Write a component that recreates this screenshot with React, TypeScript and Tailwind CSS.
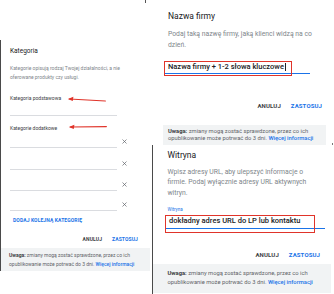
import React from 'react';

const BLUE = 'text-[#1a73e8]';

function Cross() {
  return (
    <svg viewBox="0 0 10 10" className="h-[5px] w-[5px]" fill="none" stroke="#5f6368" strokeWidth="1.4">
      <path d="M1 1 L9 9 M9 1 L1 9" />
    </svg>
  );
}

function CatRow({ h }: { h: string }) {
  return (
    <div className={`flex items-end ${h}`}>
      <div className="w-[107px] self-stretch border-b border-[#dadce0]" />
      <div className="mb-[3.5px] ml-[4.5px]">
        <Cross />
      </div>
    </div>
  );
}

function Arrow({ className, d }: { className: string; d: string }) {
  return (
    <svg className={`pointer-events-none absolute ${className}`} viewBox="0 0 50 10" fill="none">
      <path d={d} stroke="#e0342a" strokeWidth="1.4" strokeLinecap="round" />
      <path d="M1 5 L8 2.2 L7.2 7.6 Z" fill="#e0342a" />
    </svg>
  );
}

function Footer({ className, text }: { className: string; text: string }) {
  return (
    <div className={`bg-[#f1f3f4] text-[#5f6368] ${className}`}>
      <p className={text}>
        <span className="font-bold text-[#3c4043]">Uwaga:</span> zmiany mogą zostać sprawdzone, przez co ich
        <br />
        opublikowanie może potrwać do 3 dni. <span className={`font-medium ${BLUE}`}>Więcej informacji</span>
      </p>
    </div>
  );
}

function Buttons({ className, size }: { className: string; size: string }) {
  return (
    <div className={`flex justify-end font-bold tracking-[0.02em] ${size} ${className}`}>
      <span className="text-[#3c4043]">ANULUJ</span>
      <span className={`ml-[10px] ${BLUE}`}>ZASTOSUJ</span>
    </div>
  );
}

export default function App() {
  return (
    <div className="relative flex h-[294px] w-[334px] overflow-hidden bg-white font-[Roboto,Arial,sans-serif]">
      {/* drobne krawędzie sąsiednich zrzutów */}
      <div className="absolute left-[145px] top-0 h-[3px] w-px bg-[#555]" />
      <div className="absolute left-[332px] top-[143px] h-[2px] w-px bg-[#777]" />

      {/* lewy panel: kategoria */}
      <div className="relative mt-[40px] flex h-[231px] w-[150px] flex-col border-l-[1.5px] border-[#4a4a4a]">
        <div className="pl-[9px]">
          <h2 className="mt-[7px] text-[6.5px] leading-[9px] text-[#202124]">Kategoria</h2>
          <p className="mt-[8px] text-[5px] leading-[9px] text-[#80868b]">
            Kategorie opisują rodzaj Twojej działalności, a nie
            <br />
            oferowane produkty czy usługi.
          </p>
          <p className="mt-[11.5px] text-[5px] leading-[8px] text-[#3c4043]">Kategoria podstawowa</p>
          <div className="mt-[13px] h-px w-[107px] bg-[#dadce0]" />
          <p className="mt-[8px] text-[5px] leading-[8px] text-[#3c4043]">Kategorie dodatkowe</p>
          <CatRow h="h-[16px]" />
          <CatRow h="h-[22px]" />
          <CatRow h="h-[21px]" />
          <CatRow h="h-[20px]" />
          <p className={`ml-[3px] mt-[6.5px] text-[5px] font-bold leading-[7px] tracking-[0.02em] ${BLUE}`}>
            DODAJ KOLEJNĄ KATEGORIĘ
          </p>
        </div>
        <Buttons className="mt-[12px] pr-[12px] leading-[7px]" size="text-[5px]" />
        <Footer className="mt-[4.5px] h-[23px] px-[8px] pt-[3.5px]" text="text-[5px] leading-[8.5px]" />
        <Arrow className="left-[66px] top-[55px] h-[8px] w-[40px]" d="M3 5 L48 7.5" />
        <Arrow className="left-[63px] top-[83px] h-[8px] w-[48px]" d="M3 5 L48 4.5" />
      </div>

      {/* prawa kolumna */}
      <div className="ml-[2px] flex w-[182px] flex-col">
        {/* nazwa firmy */}
        <div className="ml-[11px] flex h-[145px] w-[163px] shrink-0 flex-col">
          <div className="pl-[5px]">
            <h2 className="mt-[10.5px] text-[8.5px] leading-[11px] text-[#202124]">Nazwa firmy</h2>
            <p className="mt-[7px] text-[6.8px] leading-[11px] text-[#80868b]">
              Podaj taką nazwę firmy, jaką klienci widzą na co
              <br />
              dzień.
            </p>
          </div>
          <div className="relative ml-[2px] mt-[11px] flex h-[13px] w-[145px] items-center border-b-[1.5px] border-[#1a73e8]">
            <span className="pl-[3px] text-[7.5px] font-medium leading-[10px] text-[#202124]">
              Nazwa firmy + 1-2 słowa kluczowe
            </span>
            <span className="ml-px h-[8px] w-px bg-[#202124]" />
            <div className="pointer-events-none absolute -left-[1px] -top-[1px] h-[15px] w-[128px] border-[1.5px] border-[#e0342a]" />
          </div>
          <Buttons className="mt-[28px] pr-[4px] leading-[8px]" size="text-[6px]" />
          <Footer className="mt-[15px] h-[20px] px-[5px] pt-[2.5px]" text="text-[5.8px] leading-[7.5px]" />
        </div>

        {/* witryna */}
        <div className="flex h-[149px] shrink-0 flex-col border-l-[1.5px] border-[#4a4a4a]">
          <div className="pl-[14.5px]">
            <h2 className="mt-[4.5px] text-[8.5px] leading-[11px] text-[#202124]">Witryna</h2>
            <p className="mt-[6px] text-[6.8px] leading-[10.5px] text-[#80868b]">
              Wpisz adresy URL, aby ulepszyć informacje o
              <br />
              firmie. Podaj wyłącznie adresy URL aktywnych
              <br />
              witryn.
            </p>
            <p className={`mt-[8.5px] text-[4.5px] leading-[5px] ${BLUE}`}>Witryna</p>
          </div>
          <div className="relative ml-[13px] mt-[2px] flex h-[15px] w-[159px] items-center border-b-[1.5px] border-[#1a73e8]">
            <span className="pl-[3px] text-[7.5px] font-medium leading-[10px] text-[#202124]">
              dokładny adres URL do LP lub kontaktu
            </span>
            <div className="pointer-events-none absolute -left-[1px] top-[1px] h-[18px] w-[150px] border-[1.5px] border-[#e0342a]" />
          </div>
          <Buttons className="mt-[22px] pr-[14px] leading-[8px]" size="text-[6px]" />
          <Footer className="mt-[5px] h-[29px] w-[178px] px-[14.5px] pt-[5.5px]" text="text-[5.8px] leading-[9px]" />
        </div>
      </div>
    </div>
  );
}
